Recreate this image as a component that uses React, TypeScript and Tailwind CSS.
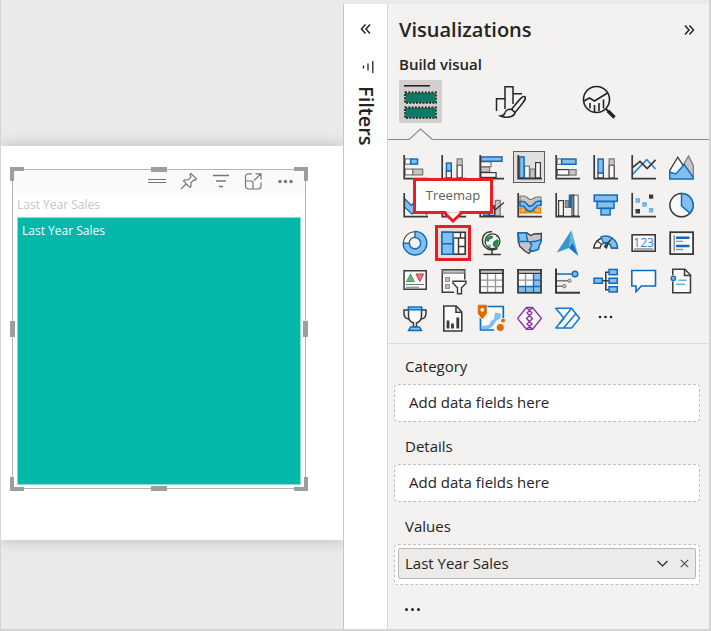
import type { ReactNode } from 'react';

const D = '#3b3a39';
const B = '#0f6cbd';
const L = '#83beec';
const G = '#c8c6c4';
const M = '#797775';
const W = '#fafafa';

type BoxProps = { x: number; y: number; w: number; h: number; f?: string; s?: string; sw?: number };

// A rectangle whose outline lies inside its bounds.
function Box({ x, y, w, h, f = W, s = D, sw = 1.2 }: BoxProps) {
  return (
    <rect x={x + sw / 2} y={y + sw / 2} width={w - sw} height={h - sw} fill={f} stroke={s} strokeWidth={sw} />
  );
}

function Axes() {
  return <path d="M1.2 0V23.6H25" fill="none" stroke={D} strokeWidth="1.7" />;
}

type Visual = { name: string; art: ReactNode };

const visuals: Visual[] = [
  {
    name: 'Stacked bar chart',
    art: (
      <>
        <Box x={1.5} y={3.3} w={6.5} h={6.5} s={M} />
        <Box x={7} y={3.3} w={8.3} h={6.5} f={L} s={B} sw={1.5} />
        <Box x={1.5} y={13.5} w={9} h={7} s={M} />
        <Box x={9.3} y={13.5} w={11} h={7} f={G} s={M} />
        <Axes />
      </>
    ),
  },
  {
    name: 'Stacked column chart',
    art: (
      <>
        <Box x={4.7} y={15.5} w={6.3} h={8} />
        <Box x={4.7} y={7.3} w={6.3} h={9.4} f={L} s={B} sw={1.5} />
        <Box x={15.5} y={9.5} w={6.3} h={14} />
        <Box x={15.5} y={3.3} w={6.3} h={7.4} f={G} s={M} />
        <Axes />
      </>
    ),
  },
  {
    name: 'Clustered bar chart',
    art: (
      <>
        <Box x={1.2} y={6.2} w={11.5} h={6} s={M} />
        <Box x={1.2} y={11.5} w={10} h={6} f={G} s={M} />
        <Box x={1.2} y={17} w={16.5} h={6} />
        <Box x={1.2} y={1.2} w={22.5} h={5.8} f={L} s={B} sw={1.5} />
        <Axes />
      </>
    ),
  },
  {
    name: 'Clustered column chart',
    art: (
      <>
        <Box x={7} y={10.5} w={6} h={13} s={M} />
        <Box x={12.5} y={13.5} w={6} h={10} f={G} s={M} />
        <Box x={18} y={7} w={6} h={16.5} />
        <Box x={1.8} y={1.2} w={6} h={22.3} f={L} s={B} sw={1.5} />
        <Axes />
      </>
    ),
  },
  {
    name: '100% stacked bar chart',
    art: (
      <>
        <Box x={1.5} y={3.3} w={5.5} h={6.7} s={M} />
        <Box x={6} y={3.3} w={15.7} h={6.7} f={L} s={B} sw={1.5} />
        <Box x={1.5} y={14} w={13} h={6.7} />
        <Box x={13.5} y={14} w={8.2} h={6.7} f={G} s={M} />
        <Axes />
      </>
    ),
  },
  {
    name: '100% stacked column chart',
    art: (
      <>
        <Box x={4.3} y={17.5} w={6.7} h={6} />
        <Box x={4.3} y={3.3} w={6.7} h={15.4} f={L} s={B} sw={1.5} />
        <Box x={15.5} y={9.7} w={6.3} h={14} />
        <Box x={15.5} y={3.3} w={6.3} h={7.4} f={G} s={M} />
        <Axes />
      </>
    ),
  },
  {
    name: 'Line chart',
    art: (
      <g fill="none" strokeWidth="1.7">
        <path d="M1.5 19.3L15.8 4.7 24.6 14" stroke="#2b88d8" />
        <path d="M1.5 12.5L9 6.3l7.2 7.2L24.6 4.8" stroke={D} />
        <Axes />
      </g>
    ),
  },
  {
    name: 'Area chart',
    art: (
      <>
        <path d="M13 12L19.5 1l4.8 9.5V23z" fill={G} stroke={M} strokeWidth="1.2" />
        <path d="M.8 23V15.5L8.8 2.2l7 11V23z" fill={W} stroke={D} strokeWidth="1.3" />
        <path d="M.8 24V17.3l6 1.7L15.3 9.5l9 13V24z" fill={L} stroke={B} strokeWidth="1.4" />
      </>
    ),
  },
  {
    name: 'Line and stacked column chart',
    art: (
      <>
        <path d="M1.5 5.5l7 7L15 5l8.5 8.5v8L15 13l-6 8-7.5-7z" fill={L} stroke={B} strokeWidth="1.3" />
        <Axes />
      </>
    ),
  },
  {
    name: 'Line and clustered column chart',
    art: (
      <>
        <Box x={4} y={8} w={6} h={15} f={L} s={B} />
        <Box x={14} y={5} w={6} h={18} f={G} s={M} />
        <Axes />
      </>
    ),
  },
  {
    name: 'Column and line chart',
    art: (
      <>
        <Box x={4} y={9} w={6} h={14} f={L} s={B} />
        <Box x={10} y={12} w={6} h={11} />
        <Box x={15.8} y={6.8} w={6} h={16.7} f={G} s={M} />
        <path d="M2 12l7-6 7 11 9-7.5" fill="none" stroke={D} strokeWidth="1.4" />
        <Axes />
      </>
    ),
  },
  {
    name: 'Ribbon chart',
    art: (
      <>
        <path d="M3 14.8h6v5H3zM17 14.8h6.500v5H17zM8 18h10v2H8z" fill="#ffb05c" stroke="#e07a10" strokeWidth="1.2" />
        <path
          d="M3 3h4.500c2.500 0 3.500 3.500 6 3.500S17.500 4 20 4h4v6h-3c-3 0-4.500 3-7.500 3S9 9 6.500 9H3z"
          fill={G}
          stroke={M}
          strokeWidth="1.1"
        />
        <path
          d="M3 8.500h3.500c3 0 3.500 5 6.500 5s4-3.500 6-4.700c1.500-.8 3-.8 5-.8v4.500h-3c-2.500 0-4 6-8 6s-5-5.500-7-5.500H3z"
          fill={L}
          stroke={B}
          strokeWidth="1.5"
        />
        <Axes />
      </>
    ),
  },
  {
    name: 'Waterfall chart',
    art: (
      <>
        <Box x={3} y={7} w={6} h={16.5} />
        <Box x={9.7} y={7} w={4.5} h={8} f="#979593" s={M} />
        <Box x={17} y={1.5} w={6.8} h={22} s={M} />
        <Box x={16.4} y={1.5} w={3} h={22} />
        <Box x={13.7} y={1.5} w={3.3} h={13.5} f={B} s={B} />
        <Axes />
      </>
    ),
  },
  {
    name: 'Funnel',
    art: (
      <>
        <Box x={0.5} y={1.3} w={24.5} h={7.8} f={L} s={B} sw={1.5} />
        <Box x={3.3} y={7.8} w={18.5} h={8.3} f={L} s={B} sw={1.5} />
        <Box x={7.3} y={14.7} w={10.6} h={8} f={L} s={B} sw={1.5} />
      </>
    ),
  },
  {
    name: 'Scatter chart',
    art: (
      <>
        <Box x={18} y={1.5} w={4.2} h={4.2} f={D} />
        <Box x={4.5} y={5.2} w={4.5} h={4.5} f={L} s="#69afe5" />
        <Box x={11.3} y={9.2} w={4.5} h={4.5} f={L} s="#69afe5" />
        <Box x={4.5} y={16} w={4.5} h={4.5} f={D} />
        <Box x={18} y={15} w={4.2} h={4.5} f={L} s="#69afe5" />
        <Axes />
      </>
    ),
  },
  {
    name: 'Pie chart',
    art: (
      <>
        <circle cx="12.5" cy="12.2" r="11.6" fill={W} stroke={D} strokeWidth="1.5" />
        <path d="M12.5.6a11.6 11.6 0 0 1 8.5 19.5L12.5 13z" fill={L} stroke={B} strokeWidth="1.5" />
      </>
    ),
  },
  {
    name: 'Donut chart',
    art: (
      <>
        <circle cx="12" cy="12.2" r="8.7" fill="none" stroke={D} strokeWidth="6.6" />
        <circle cx="12" cy="12.2" r="8.7" fill="none" stroke={W} strokeWidth="4.6" />
        <path
          d="M12 .4a11.8 11.8 0 1 1-11.8 11.8h6.200A5.600 5.600 0 1 0 12 6.600z"
          fill={L}
          stroke={B}
          strokeWidth="1.4"
        />
      </>
    ),
  },
  {
    name: 'Treemap',
    art: (
      <>
        <Box x={0.2} y={0.5} w={24.8} h={23.5} sw={1.6} />
        <path d="M12.5 7h12M17.5 7v17M12.5 7v17M19.5 1v6M17.5 15.5h7" stroke={D} strokeWidth="1.4" />
        <Box x={0.2} y={0.5} w={12.6} h={13} f={L} s={B} sw={1.5} />
        <Box x={0.2} y={12} w={12.6} h={12} f={L} s={B} sw={1.5} />
      </>
    ),
  },
  {
    name: 'Map',
    art: (
      <>
        <circle cx="13.5" cy="10.3" r="7.4" fill={W} stroke={D} strokeWidth="1.3" />
        <path d="M7.500 7l3.500-2.500 3 .5-.5 2.500-3 1-1 2.500-2.500-1zM14.500 10.500l4-2.500 1.500 2-1 4-3 2.500-2.500-2.500zM17 5l2 1-1 1zM9 13.500l3 1-1 2z" fill="#218a45" />
        <path d="M13 .8C7-.3 3 4.500 3.500 10.500c.5 6.500 8 10.500 15 7M13 19.500V23M4.500 23.400h17.500" fill="none" stroke={D} strokeWidth="1.500" />
      </>
    ),
  },
  {
    name: 'Filled map',
    art: (
      <>
        <path
          d="M.8 2h9l4 2.500 3-1.500 7.500-.5v7l-2 4-1 4.500-4 1.500-3 .5-2.500 2.500-4-2.500-5-4.500-1.500-5z"
          fill={G}
          stroke={D}
          strokeWidth="1.3"
        />
        <path d="M.8 2h9.200l-.5 3 1.500 5.500H1.500C3 7.500 1.500 5 .8 2z" fill={L} stroke={B} strokeWidth="1.4" />
        <path d="M12.500 11l6-.7 5.800-1.800v2l-2 4-1 4-4.500 1.500-4.500-1 2.500-5z" fill={L} stroke={B} strokeWidth="1.4" />
      </>
    ),
  },
  {
    name: 'Azure map',
    art: (
      <>
        <path d="M16.5-1L1.8 21.5 14 17z" fill="#3a96c9" />
        <path d="M16.5-1L14 17l9.3 7.8z" fill="#5bb5e0" />
        <path d="M14 17l3.500-5L23.300 24.800z" fill="#1870c0" />
      </>
    ),
  },
  {
    name: 'Gauge',
    art: (
      <>
        <path d="M.7 17A12 12 0 0 1 24.500 17H18.500a5.800 5.800 0 0 0-11.500 0z" fill={W} stroke={D} strokeWidth="1.4" />
        <path d="M8 6A12 12 0 0 1 24.500 17H18.500a5.800 5.800 0 0 0-8-5z" fill={L} stroke={B} strokeWidth="1.4" />
        <path d="M3.500 9.500l5 3.700M16 11l3-4" stroke={D} strokeWidth="1.2" />
        <path d="M16.500 9.500L11 15.500l2.500 2z" fill={D} stroke={D} strokeWidth="1" />
      </>
    ),
  },
  {
    name: 'Card',
    art: (
      <>
        <Box x={0.3} y={3} w={24.7} h={18} sw={1.6} />
        <text x="12.6" y="15.5" textAnchor="middle" fontSize="12" fill="#2b88d8" fontFamily="Open Sans, sans-serif">
          123
        </text>
        <path d="M3 18h19" stroke={M} strokeWidth="1.2" />
      </>
    ),
  },
  {
    name: 'Multi-row card',
    art: (
      <>
        <Box x={0.3} y={0.3} w={24.7} h={23.7} sw={1.8} />
        <path d="M5.200 4v16.500" stroke={M} strokeWidth="1.2" />
        <path d="M7 6.800h13.500M7 15h13.500" stroke={B} strokeWidth="2.5" />
        <path d="M7 10.300h7M7 18.500h7" stroke="#979593" strokeWidth="1.3" />
      </>
    ),
  },
  {
    name: 'KPI',
    art: (
      <>
        <Box x={0.3} y={1} w={23.7} h={20} sw={1.5} />
        <path d="M3.700 12.500L7.500 5l3.700 7.500z" fill="#68b984" stroke="#3a9b5c" />
        <path d="M13 5h7.500L16.800 12.500z" fill="#f1787c" stroke="#d13438" />
        <path d="M3 15.500h18M3 18.300h13" stroke={M} strokeWidth="1.1" />
      </>
    ),
  },
  {
    name: 'Slicer',
    art: (
      <>
        <Box x={0.5} y={0} w={24} h={24} sw={1.5} />
        <Box x={1.2} y={0.7} w={22.6} h={4} f={G} s={M} />
        <Box x={4} y={8} w={5} h={5} f={G} s="#979593" />
        <Box x={4} y={15} w={5} h={5} f={G} s="#979593" />
        <path d="M10.500 10.500h16v15H13.500z" fill="#f3f2f1" />
        <path d="M12 12.300h13v2l-4.500 4.500v6h-4v-6L12 14.300z" fill={W} stroke={D} strokeWidth="1.4" />
      </>
    ),
  },
  {
    name: 'Table',
    art: (
      <>
        <Box x={0.3} y={0} w={24.4} h={24.4} />
        <path d="M1 11.200h23.500M1 17.700h23.500M8.500 5v19M16.500 5v19" stroke="#979593" strokeWidth="1.3" />
        <Box x={0.3} y={0} w={24.4} h={5} f={G} />
        <Box x={0.3} y={0} w={24.4} h={24.4} f="none" sw={1.5} />
      </>
    ),
  },
  {
    name: 'Matrix',
    art: (
      <>
        <Box x={0.3} y={0} w={24.4} h={24.4} />
        <path d="M16.500 5H24v18.500H1v-6.500h15.500z" fill={L} />
        <path d="M1 11.200h15.500M8.500 5v12.500" stroke="#979593" strokeWidth="1.3" />
        <path d="M1 17.500h23M8.500 17.500V24M16.500 5v19M16.500 11.200H24" stroke={B} strokeWidth="1.3" />
        <Box x={0.3} y={0} w={24.4} h={5} f={G} />
        <Box x={0.3} y={0} w={24.4} h={24.4} f="none" sw={1.5} />
      </>
    ),
  },
  {
    name: 'Key influencers',
    art: (
      <>
        <path d="M2 5h16" stroke={B} strokeWidth="1.5" />
        <circle cx="20" cy="5" r="2.800" fill={L} stroke={B} strokeWidth="1.4" />
        <path d="M2 11.700h11M2 17.200h6" stroke={M} strokeWidth="1.5" />
        <circle cx="14.5" cy="11.7" r="1.7" fill={G} stroke={M} />
        <circle cx="9.3" cy="17.2" r="1.7" fill={G} stroke={M} />
        <path d="M1-.5V23.700H25" fill="none" stroke={D} strokeWidth="2" />
      </>
    ),
  },
  {
    name: 'Decomposition tree',
    art: (
      <>
        <path d="M9 11.700h7M16 3.200h-3.200v17.500H16" fill="none" stroke={D} strokeWidth="1.5" />
        <Box x={0.3} y={8.5} w={9.7} h={6.5} f={L} s={B} sw={1.5} />
        <Box x={15.3} y={-0.3} w={9.7} h={6.7} f={L} s={B} sw={1.5} />
        <Box x={15.3} y={8.5} w={9.7} h={6.5} f={L} s={B} sw={1.5} />
        <Box x={15.3} y={17} w={9.7} h={6.7} f={L} s={B} sw={1.5} />
      </>
    ),
  },
  {
    name: 'Q&A',
    art: <path d="M.8 1.500h23.700V17H10.500L5 22.500V17H.8z" fill={W} stroke={B} strokeWidth="1.6" />,
  },
  {
    name: 'Smart narrative',
    art: (
      <>
        <path d="M3.800.3h12l5.700 5.700V23.700H3.800z" fill={W} stroke={D} strokeWidth="1.5" />
        <path d="M15.500.5v6h6" fill="none" stroke={D} strokeWidth="1.5" />
        <path d="M9.500 11.200h8M7 15.200h9" stroke="#69afe5" strokeWidth="1.4" />
        <circle cx="4.3" cy="9.3" r="3.3" fill="#f3f2f1" />
        <circle cx="4.3" cy="9.3" r="2.2" fill={L} stroke={B} strokeWidth="1.4" />
      </>
    ),
  },
  {
    name: 'Metrics',
    art: (
      <>
        <path d="M5.500 3H1v3c0 4 2.500 6 5.500 6M18.500 3H23v3c0 4-2.500 6-5.500 6" fill="none" stroke={D} strokeWidth="1.5" />
        <path d="M5.500 1h13v8c0 4-2 6-5 7v4h-3v-4c-3-1-5-3-5-7z" fill={W} stroke={D} strokeWidth="1.5" />
        <Box x={4.8} y={-0.7} w={14.5} h={4.2} f={L} s={B} sw={1.4} />
        <path d="M7.500 20h9l2 3.500h-13z" fill={L} stroke={B} strokeWidth="1.4" />
      </>
    ),
  },
  {
    name: 'Paginated report',
    art: (
      <>
        <path d="M2.800-1h12.500l5.500 6v19h-18z" fill={W} stroke={D} strokeWidth="1.6" />
        <path d="M15-.8v6h6" fill="none" stroke={D} strokeWidth="1.6" />
        <path d="M7 13.500v8M11.500 16.500v5M16.800 10.500v11" stroke={D} strokeWidth="2.8" />
      </>
    ),
  },
  {
    name: 'ArcGIS Maps',
    art: (
      <>
        <path d="M1.500-.5H24.300V12.500l-5 5-1 5.500H1.500z" fill={W} stroke={B} strokeWidth="1.7" />
        <path d="M16 5.500l6 1-.5 5-4 2-4 6-4 2.500H3v-3l7-1 2-4 3-2z" fill={L} />
        <path d="M23 11h3.500v14.500H16l-1-3 1-4z" fill="#f3f2f1" />
        <path d="M-1.500-2.500H8.500V7L3.300 13.500l-5-6z" fill="#f3f2f1" />
        <path d="M-.8-1.800h8.200v8.300L3.300 11.800-.8 6.500z" fill="#e06a00" stroke="#e06a00" strokeWidth=".8" strokeLinejoin="round" />
        <circle cx="3.3" cy="2.8" r="1.9" fill={W} />
        <circle cx="21.3" cy="20.500" r="3.5" fill="#e06a00" />
        <circle cx="24" cy="13.5" r="2" fill="#e06a00" />
      </>
    ),
  },
  {
    name: 'Power Apps',
    art: (
      <g stroke="#8a2da5" strokeWidth="1.4" strokeLinejoin="round">
        <path d="M.6 11.400L9.500.5h6L24.400 11.400 15.500 22.300h-6z" fill={W} />
        <path d="M15.500.5L10 6l5.500 5.400L10 17l5.500 5.300M9.500.5L15 6l-5.500 5.400L15 17l-5.500 5.300" fill="none" />
      </g>
    ),
  },
  {
    name: 'Power Automate',
    art: (
      <>
        <path
          d="M.8 1.300h15.700l8 10-8 9.700H.8L9 11.300z"
          fill={W}
          stroke="#0f78d4"
          strokeWidth="1.5"
          strokeLinejoin="round"
        />
        <path d="M16.500 1.300L4.500 16.300M21 6.500L8.500 21" stroke="#0f78d4" strokeWidth="1.5" />
      </>
    ),
  },
  {
    name: 'Get more visuals',
    art: (
      <g fill="#252423">
        <circle cx="7" cy="10" r="1.3" />
        <circle cx="12.5" cy="10" r="1.3" />
        <circle cx="18" cy="10" r="1.3" />
      </g>
    ),
  },
];

function Tooltip() {
  return (
    <span
      role="tooltip"
      className="absolute -top-[46px] left-1/2 z-10 flex h-9 w-20 -translate-x-1/2 items-center justify-center border-3 border-[#ed1c24] bg-white text-[13px] text-[#605e5c]"
    >
      Treemap
      <svg className="absolute top-[30px] left-[27px]" width="20" height="12" viewBox="0 0 20 12" aria-hidden="true">
        <path d="M1 1.500L10 10 19 1.500" fill="#fff" stroke="#ed1c24" strokeWidth="3" />
        <path d="M3 0h14l-1.500 1.500h-11z" fill="#fff" />
      </svg>
    </span>
  );
}

function VisualButton({ name, art }: Visual) {
  const highlighted = name === 'Treemap';
  const current = name === 'Clustered column chart';
  const look = highlighted
    ? 'size-9 border-3 border-[#ed1c24] bg-[#e1dfdd]'
    : current
      ? 'size-8 border border-[#605e5c] bg-[#e1dfdd]'
      : 'size-8';
  return (
    <div className="relative flex h-[38px] items-center justify-center">
      <button type="button" aria-label={name} aria-pressed={current} className={`flex items-center justify-center ${look}`}>
        <svg className="size-6 shrink-0 overflow-visible" viewBox="0 0 24 24" aria-hidden="true">
          {art}
        </svg>
      </button>
      {highlighted && <Tooltip />}
    </div>
  );
}

const handles = [
  '-top-[3px] -left-[3px] size-[14px] border-t-4 border-l-4',
  '-top-[3px] -right-[3px] size-[14px] border-t-4 border-r-4',
  '-bottom-[3px] -left-[3px] size-[14px] border-b-4 border-l-4',
  '-right-[3px] -bottom-[3px] size-[14px] border-r-4 border-b-4',
  '-top-[3px] left-1/2 w-4 -translate-x-1/2 border-t-5',
  '-bottom-[3px] left-1/2 w-4 -translate-x-1/2 border-t-5',
  'top-1/2 -left-[3px] h-4 -translate-y-1/2 border-l-5',
  'top-1/2 -right-[3px] h-4 -translate-y-1/2 border-l-5',
];

const tools: Visual[] = [
  { name: 'Drag visual', art: <path d="M-1 6.500h18M-1 9.500h18" /> },
  {
    name: 'Pin visual',
    art: (
      <path d="M10 .5l5.500 5.500-1 1.200-1.700-.2-3 3 .2 3.500-1.200 1L2.500 8l1-1.200 3.500.2 3-3L9 2zM5.300 10.800L0 16" />
    ),
  },
  { name: 'Filters on visual', art: <path d="M0 2.500h16M3 8h10M6 13.500h4" strokeWidth="1.5" /> },
  {
    name: 'Focus mode',
    art: (
      <path d="M7 .8H3.500a3 3 0 0 0-3 3V13a3 3 0 0 0 3 3h9.500a3 3 0 0 0 3-3V9.500M.5 8h5a2.500 2.500 0 0 1 2.500 2.500V16M9 7.500L16 .8M10.500.8H16V6.500" />
    ),
  },
  {
    name: 'More options',
    art: (
      <g fill="#777" stroke="none">
        <circle cx="3" cy="8.5" r="1.7" />
        <circle cx="8.5" cy="8.5" r="1.7" />
        <circle cx="14" cy="8.5" r="1.7" />
      </g>
    ),
  },
];

function ReportCanvas() {
  return (
    <main className="min-w-0 flex-1 pt-[146px]">
      <div className="h-[394px] bg-white pt-[23px] pl-[11px] shadow-[0_0_14px_rgba(0,0,0,0.22)]">
        <section className="relative flex h-80 w-[294px] flex-col border border-[#b3b3b3]">
          {handles.map((place) => (
            <span key={place} className={`absolute border-[#9e9e9e] ${place}`} />
          ))}
          <div className="flex h-[25px] items-center justify-end gap-4 bg-[#fafafa] pr-3 pb-1">
            {tools.map((tool) => (
              <button key={tool.name} type="button" aria-label={tool.name}>
                <svg
                  className="size-4 overflow-visible"
                  viewBox="0 0 16 16"
                  fill="none"
                  stroke="#777"
                  strokeWidth="1.2"
                  aria-hidden="true"
                >
                  {tool.art}
                </svg>
              </button>
            ))}
          </div>
          <h2 className="pl-1 text-xs leading-5 text-[#c4c4c4]">Last Year Sales</h2>
          <div className="mx-1 mt-0.5 mb-[3px] flex-1 border border-[#8fdcd6] bg-[#01b8aa] p-1 text-xs leading-[18px] text-white">
            Last Year Sales
          </div>
        </section>
      </div>
    </main>
  );
}

function DoubleChevron({ flip = false }: { flip?: boolean }) {
  return (
    <svg
      className={`size-3 ${flip ? 'rotate-180' : ''}`}
      viewBox="0 0 12 12"
      fill="none"
      stroke="#252423"
      strokeWidth="1.5"
      aria-hidden="true"
    >
      <path d="M5.500 1.500L1.500 6l4 4.500M10 1.500L6 6l4 4.500" />
    </svg>
  );
}

function FiltersPane() {
  return (
    <aside className="flex w-11 shrink-0 flex-col items-center border-l border-[#c8c6c4] bg-white pt-[19px]">
      <button type="button" aria-label="Expand filters pane">
        <DoubleChevron />
      </button>
      <svg className="mt-6 ml-1 size-4" viewBox="0 0 16 16" stroke="#252423" strokeWidth="1.3" aria-hidden="true">
        <path d="M3.500 6.500v3M8 4.500v7M12.800 2v12" />
      </svg>
      <h2 className="mt-[11px] text-xl leading-7 font-semibold text-[#252423] [writing-mode:vertical-rl]">Filters</h2>
    </aside>
  );
}

function Tabs() {
  return (
    <div className="relative flex gap-[46px] border-b border-[#8a8886] px-[11px] pt-1 pb-4">
      <button
        type="button"
        aria-label="Build visual"
        aria-pressed="true"
        className="flex size-[43px] items-center justify-center rounded-xs bg-[#d2d0ce]"
      >
        <svg width="33" height="35" viewBox="0 0 33 35" aria-hidden="true">
          <path d="M0 1.800h26" stroke="#252423" strokeWidth="1.6" />
          <path d="M1.500 9h30v9.500h-30zM1.500 24h30v9.500h-30z" fill="#117865" />
          <g fill="none" stroke="#252423" strokeWidth="1.8" strokeDasharray="2 1.300">
            <rect x="1" y="8.500" width="31" height="10.300" />
            <rect x="1" y="23.500" width="31" height="10.300" />
          </g>
        </svg>
      </button>
      <button type="button" aria-label="Format visual" className="flex size-[43px] items-center justify-center">
        <svg width="33" height="33" viewBox="0 0 33 33" fill="none" stroke="#252423" strokeWidth="1.5" aria-hidden="true">
          <path d="M3.500 26V13.700h8.300M12 24V1.800h8V19M20 8.800h9" />
          <path d="M18 24.500l-3.500 1-2 1.500-2 3.500-6 .5 4 2.500h12l2-4z" fill="#f3f2f1" stroke="none" />
          <path d="M32 11.800c-2-1.300-4 .5-13.500 12.700l3.500 3C31.500 16.500 33.500 13.500 32 11.800z" fill="#f3f2f1" />
          <path d="M18.500 24.500c-3-.7-6 .8-6.500 3.200-.5 2-2 3-4.500 3.300 4 1.800 13.500 2 14.500-3.500z" fill="#f3f2f1" />
        </svg>
      </button>
      <button type="button" aria-label="Add further analyses" className="flex size-[43px] items-center justify-center">
        <svg width="34" height="34" viewBox="0 0 34 34" fill="none" stroke="#252423" strokeWidth="1.6" aria-hidden="true">
          <circle cx="14.500" cy="14.500" r="13" />
          <path d="M2 16l5.500-3 5 3L25.500 8M8 18v5.500M12.500 20v7M17 18v8M21.500 14.500v9" />
          <path d="M24 24l3 3" strokeWidth="2" />
          <path d="M26 26l6.500 6.500" strokeWidth="3.6" />
        </svg>
      </button>
      <svg className="absolute -bottom-px left-[21px]" width="24" height="12" viewBox="0 0 24 12" aria-hidden="true">
        <path d="M0 12L12 .8 24 12z" fill="#f3f2f1" />
        <path d="M0 11.500L11.500 1 23.500 11.500" fill="none" stroke="#8a8886" strokeWidth="1.1" />
      </svg>
    </div>
  );
}

function FieldWell({ label, field }: { label: string; field?: string }) {
  return (
    <section>
      <h3 className="px-[11px] leading-6">{label}</h3>
      {field ? (
        <div className="mt-1.5 rounded-sm border border-dashed border-[#c1bfbd] bg-white px-[3px] pt-[3px] pb-[5px]">
          <div className="flex h-[31px] items-center gap-3 rounded-xs border border-[#bab8b7] bg-[#edebe9] px-1.5">
            <span className="flex-1">{field}</span>
            <button type="button" aria-label="Field options">
              <svg width="11" height="11" viewBox="0 0 11 11" fill="none" stroke="#252423" strokeWidth="1.2" aria-hidden="true">
                <path d="M.5 3l5 5 5-5" />
              </svg>
            </button>
            <button type="button" aria-label="Remove field">
              <svg width="9" height="9" viewBox="0 0 9 9" fill="none" stroke="#484644" strokeWidth="1.1" aria-hidden="true">
                <path d="M.8.8l7.400 7.400M8.200.8L.8 8.200" />
              </svg>
            </button>
          </div>
        </div>
      ) : (
        <div className="mt-1.5 flex h-[38px] items-center rounded-sm border border-dashed border-[#c1bfbd] bg-white px-3.5 pb-0.5">
          Add data fields here
        </div>
      )}
    </section>
  );
}

function VisualizationsPane() {
  return (
    <aside className="w-[322px] shrink-0 border-l border-[#d8d6d4] bg-[#f3f2f1] text-[15px] text-[#252423]">
      <header className="flex items-center justify-between pt-3 pr-3.5 pl-[11px]">
        <h1 className="text-xl leading-7 font-semibold">Visualizations</h1>
        <button type="button" aria-label="Collapse visualizations pane">
          <DoubleChevron flip />
        </button>
      </header>
      <h2 className="mt-2 px-[11px] leading-6 font-semibold">Build visual</h2>
      <Tabs />
      <div className="grid grid-cols-8 border-b border-[#dddbd9] pt-2 pr-[9px] pb-[5px] pl-2">
        {visuals.map((visual) => (
          <VisualButton key={visual.name} {...visual} />
        ))}
      </div>
      <div className="flex flex-col gap-3 pt-2.5 pr-[9px] pl-1.5">
        <FieldWell label="Category" />
        <FieldWell label="Details" />
        <FieldWell label="Values" field="Last Year Sales" />
      </div>
      <button type="button" aria-label="More fields" className="mt-4 ml-4 flex h-4 items-center gap-[3px] px-px">
        <span className="size-[3px] rounded-full bg-[#252423]" />
        <span className="size-[3px] rounded-full bg-[#252423]" />
        <span className="size-[3px] rounded-full bg-[#252423]" />
      </button>
    </aside>
  );
}

export default function App() {
  return (
    <div className="flex min-h-screen border-r-2 border-b-2 border-l border-[#d4d4d4] bg-[#eaeaea] font-['Open_Sans','Noto_Sans',sans-serif]">
      <div className="flex min-w-0 flex-1 overflow-hidden">
        <ReportCanvas />
      </div>
      <div className="flex pt-1">
        <FiltersPane />
        <VisualizationsPane />
      </div>
    </div>
  );
}
